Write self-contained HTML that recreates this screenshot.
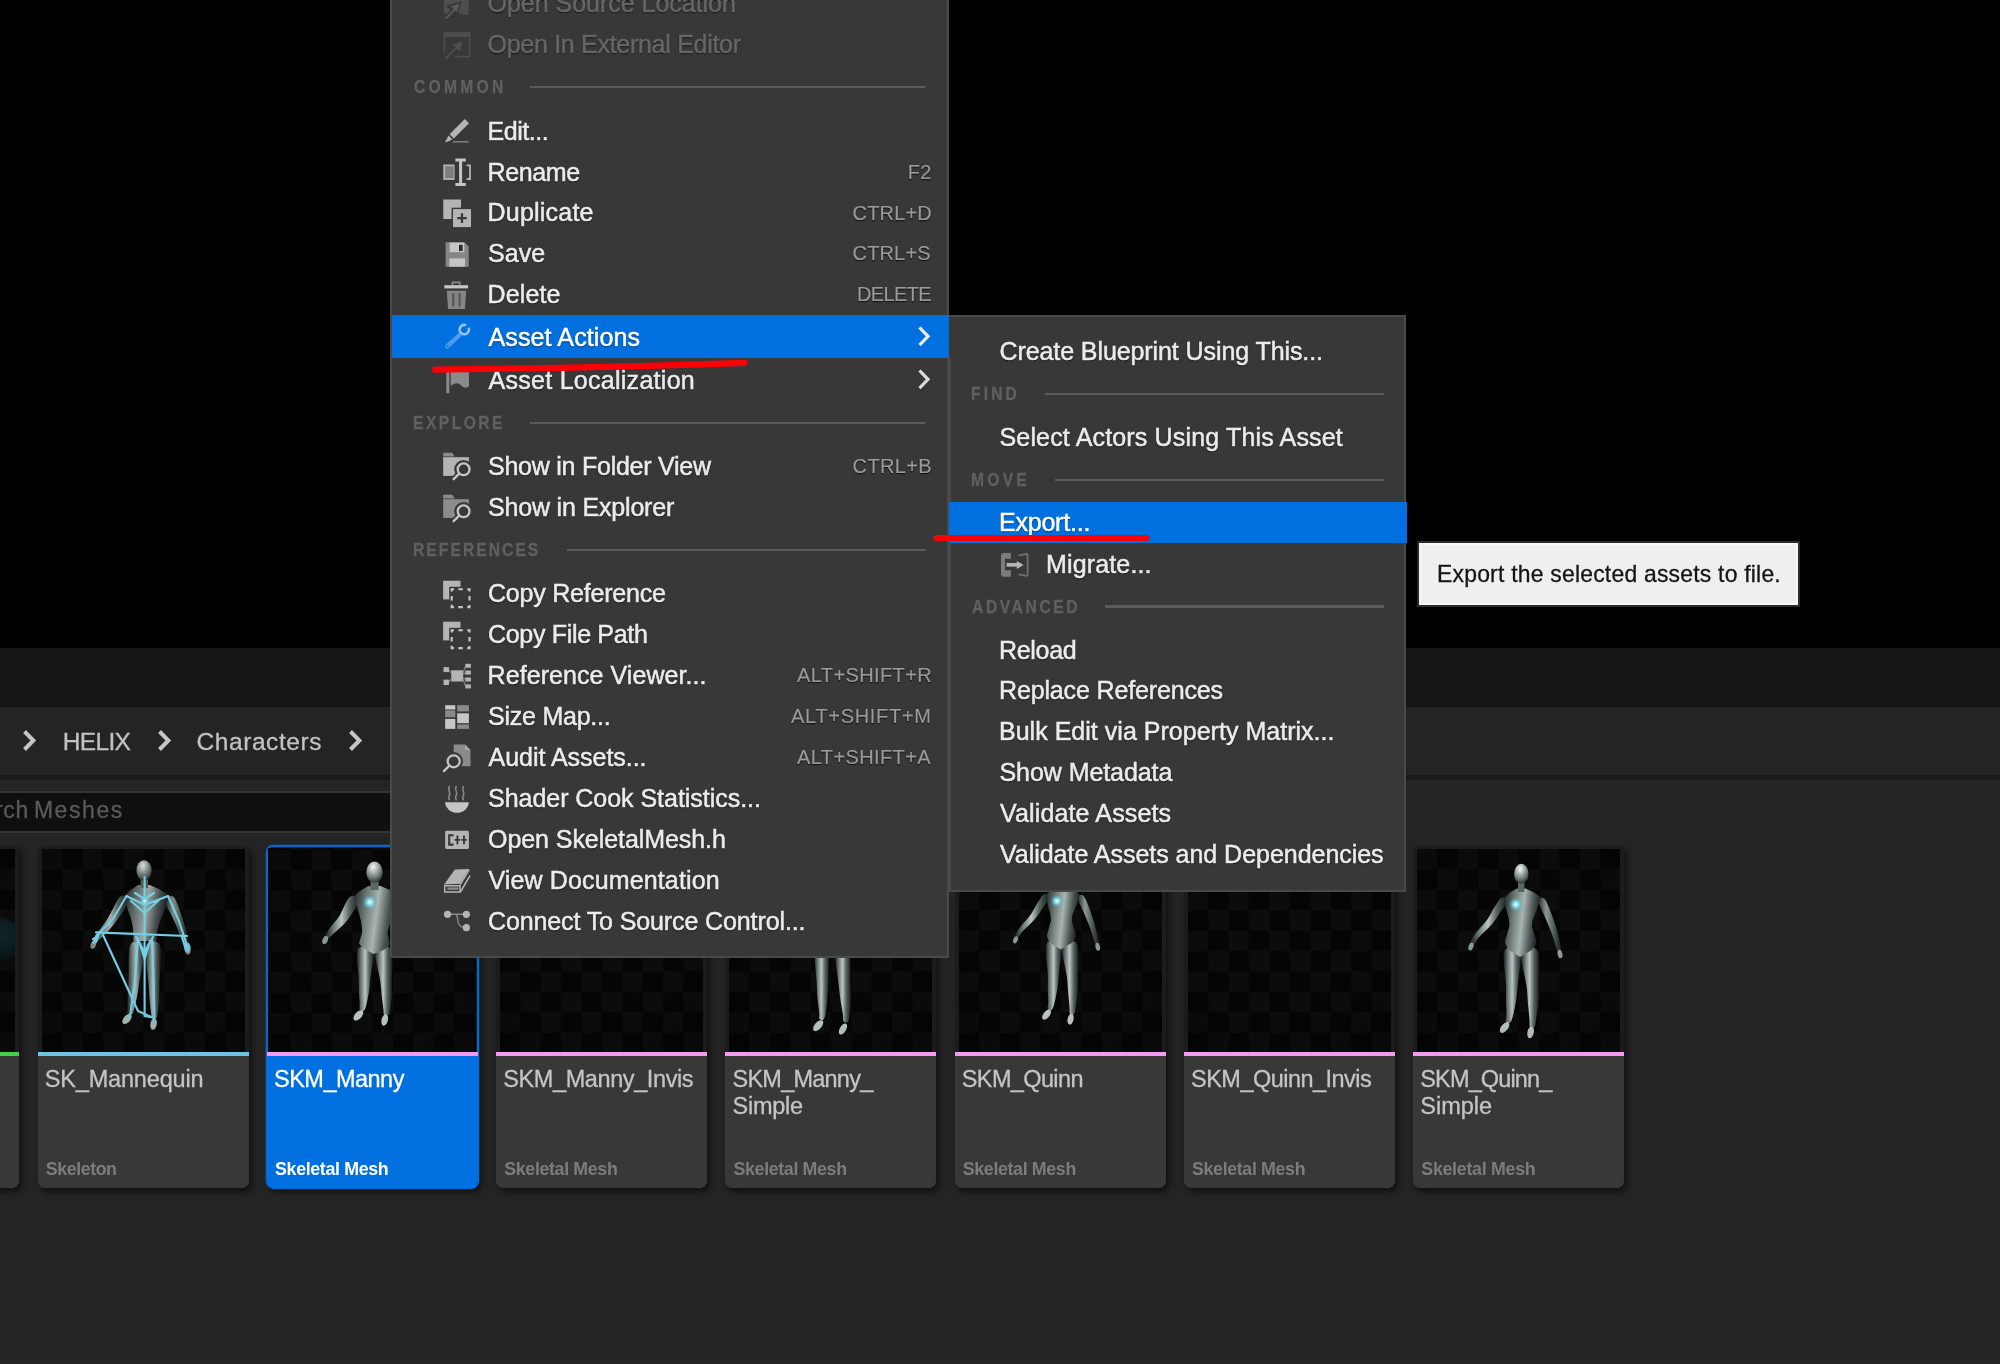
<!DOCTYPE html>
<html><head><meta charset="utf-8"><title>UE</title>
<style>
html,body{margin:0;padding:0;background:#000;}
body{width:2000px;height:1364px;position:relative;overflow:hidden;font-family:"Liberation Sans",sans-serif;}
.a{position:absolute}
.t{position:absolute;white-space:pre;text-shadow:0 1.2px 1.2px rgba(0,0,0,.8);-webkit-text-stroke:0.5px currentColor;}
.t.sc{-webkit-text-stroke:0.15px currentColor}
.t.ns{text-shadow:none;-webkit-text-stroke:0.3px currentColor}
.t.tb{-webkit-text-stroke:0}
.tl{position:absolute;left:0;top:0;width:2000px;height:1364px;will-change:transform}
.ic{position:absolute;overflow:visible}
.hl{position:absolute;height:2.2px;background:#5c5c5c}
.tile{position:absolute;top:846px;width:211px;height:342px;background:#1c1c1c;border-radius:5px 5px 7px 7px;box-shadow:3px 4px 6px rgba(0,0,0,.55)}
.tile .th{position:absolute;left:4.2px;top:3.4px;width:203px;height:202.6px;overflow:hidden;
 background:conic-gradient(#050505 25%,#0c0c0c 0 50%,#050505 0 75%,#0c0c0c 0) 0 0/40.8px 40.8px}
.tile .th:after{content:"";position:absolute;left:0;top:0;right:0;bottom:0;background:radial-gradient(ellipse at 50% 45%,rgba(0,0,0,0) 35%,rgba(0,0,0,.22) 100%)}
.tile .th svg{position:absolute;left:-0.7px;top:-0.4px}
.tile .st{position:absolute;left:0;top:206px;width:211px;height:4.2px}
.tile .lb{position:absolute;left:0;top:210.2px;width:211px;height:131.8px;background:#383838;border-radius:0 0 7px 7px}
.tile.sel{box-shadow:0 0 0 1.3px #0868d0,0 0 0 1.2px #0868d0 inset,3px 4px 6px rgba(0,0,0,.55);background:#0a0a0a;border-radius:6px 6px 7px 7px}
.tile.sel .th{left:1.6px;top:1.6px;width:207.8px;height:204.4px;background-position:2.6px 1.8px}
.tile.sel .th svg{left:2.6px;top:1.8px}
.tile.sel .lb{background:#0070e0}
</style></head><body>
<!-- content browser background -->
<div class="a" style="left:0;top:648px;width:2000px;height:59px;background:#151515"></div>
<div class="a" style="left:0;top:707px;width:2000px;height:657px;background:#242424"></div>
<div class="a" style="left:0;top:775px;width:2000px;height:5px;background:#1a1a1a"></div>
<div class="a" style="left:-4px;top:791px;width:1390px;height:38px;background:#0f0f0f;border:2px solid #353535;border-radius:3px"></div>
<div class="tile" style="left:-191.75px"><div class="th"><div style="position:absolute;left:165px;top:68px;width:44px;height:44px;border-radius:50%;background:radial-gradient(circle at 60% 40%,#12292e,#081518 70%)"></div></div><div class="st" style="background:#3fd24a"></div><div class="lb"></div></div>
<div class="tile" style="left:37.5px"><div class="th"><svg width="204" height="203" viewBox="0 0 204 203"><defs><linearGradient id="g1m" x1="0" y1="0" x2="1" y2="0"><stop offset="0" stop-color="#1c2221"/><stop offset=".28" stop-color="#7c8885"/><stop offset=".48" stop-color="#bac4c1"/><stop offset=".72" stop-color="#566260"/><stop offset="1" stop-color="#181d1c"/></linearGradient><linearGradient id="g1d" x1="0" y1="0" x2="1" y2="0"><stop offset="0" stop-color="#262d2b"/><stop offset=".35" stop-color="#8c9895"/><stop offset=".6" stop-color="#5e6a67"/><stop offset="1" stop-color="#1c2221"/></linearGradient><linearGradient id="g1t" x1="0" y1="0" x2="1" y2="0.2"><stop offset="0" stop-color="#242b29"/><stop offset=".3" stop-color="#707c79"/><stop offset=".55" stop-color="#a9b4b1"/><stop offset=".8" stop-color="#4e5957"/><stop offset="1" stop-color="#1b2120"/></linearGradient><radialGradient id="g1c"><stop offset="0" stop-color="#f2ffff"/><stop offset=".35" stop-color="#8fe6f2" stop-opacity=".95"/><stop offset="1" stop-color="#3aa8c0" stop-opacity="0"/></radialGradient><radialGradient id="g1h" cx=".42" cy=".25" r=".75"><stop offset="0" stop-color="#ffffff"/><stop offset=".35" stop-color="#b4bfbc"/><stop offset=".8" stop-color="#59635f"/><stop offset="1" stop-color="#2e3533"/></radialGradient><filter id="g1b" x="-20%" y="-20%" width="140%" height="140%"><feGaussianBlur stdDeviation="0.75"/></filter></defs><g transform="translate(0 0) scale(1)"><g opacity=".9"><g filter="url(#g1b)"><path d="M85.0 47.5 Q80.2 44.6 76.9 50.5 Q73.6 56.4 70.5 62.5 Q67.5 68.6 64.3 73.1 Q61.1 77.6 57.9 81.5 Q54.6 85.5 52.8 88.5 Q51.0 91.5 53.0 93.0 Q55.0 94.5 57.2 92.0 Q59.4 89.5 63.1 86.0 Q66.9 82.4 70.7 77.9 Q74.5 73.4 78.5 67.5 Q82.4 61.6 86.1 56.0 Q89.8 50.4 85.0 47.5 Z" fill="url(#g1m)"/><path d="M127.0 47.5 Q121.9 49.9 125.1 56.0 Q128.3 62.1 131.2 67.8 Q134.0 73.5 136.0 78.3 Q137.9 83.1 139.5 87.5 Q141.0 91.8 142.2 95.3 Q143.5 98.7 146.0 98.0 Q148.5 97.3 147.8 93.7 Q147.0 90.2 146.0 85.5 Q145.1 80.9 143.5 75.7 Q142.0 70.5 139.8 64.2 Q137.7 57.9 134.9 51.5 Q132.1 45.1 127.0 47.5 Z" fill="url(#g1d)"/><path d="M97.0 92.0 Q88.7 91.2 88.1 101.2 Q87.5 111.2 87.6 120.8 Q87.7 130.4 87.0 137.9 Q86.4 145.4 86.5 153.5 Q86.5 161.5 86.1 163.4 Q85.7 165.3 88.4 166.0 Q91.1 166.7 91.8 164.6 Q92.5 162.5 94.5 154.5 Q96.6 146.6 97.5 139.1 Q98.3 131.6 100.4 122.2 Q102.5 112.8 103.9 102.8 Q105.3 92.8 97.0 92.0 Z" fill="url(#g1m)"/><path d="M111.6 92.0 Q103.2 92.3 104.1 102.8 Q104.9 113.3 106.3 123.2 Q107.6 133.1 108.0 141.1 Q108.3 149.1 109.3 157.5 Q110.4 166.0 110.4 167.9 Q110.5 169.9 113.2 170.0 Q115.9 170.1 116.2 168.1 Q116.4 166.0 117.5 157.5 Q118.5 148.9 118.4 140.9 Q118.4 132.9 119.1 122.8 Q119.9 112.7 119.9 102.2 Q120.0 91.7 111.6 92.0 Z" fill="url(#g1m)"/><path d="M97 36 L109 36 Q119 40 127.5 46 Q126 58 120.5 68 Q116.5 78 115.5 86 L115.5 92 L92.5 92 L92.5 86 Q92 76 89.5 68 Q85 58 84.5 46 Q90 40 97 36 Z" fill="url(#g1t)"/><rect x="99.6" y="30" width="7.4" height="9" fill="#5c6764"/><ellipse cx="103" cy="21.5" rx="7.6" ry="10.2" fill="url(#g1h)"/><ellipse cx="86" cy="170" rx="3.4" ry="6" transform="rotate(40 86 170)" fill="#c2ccc9"/><ellipse cx="112.6" cy="175" rx="3.2" ry="5.8" transform="rotate(10 112.6 175)" fill="#c2ccc9"/><ellipse cx="52.4" cy="95.5" rx="2.6" ry="4.4" transform="rotate(20 52.4 95.5)" fill="#8c9895"/><ellipse cx="146.6" cy="100.5" rx="3" ry="5" transform="rotate(-8 146.6 100.5)" fill="#8c9895"/></g></g><g stroke="#74cfe6" stroke-width="2.1" fill="none" stroke-linecap="round" stroke-linejoin="round" filter="url(#g1b)"><path d="M103.6 28 V167"/><path d="M55 83.4 L146 87"/><path d="M62 86 L97 162 L111.5 168.5 L103.6 167"/><path d="M85.5 47 L72 70 L55.5 86.5 L52.5 94"/><path d="M127 47 L137.6 71 L144 90 L146 98"/><path d="M85.5 47 L103.6 56 L127 47 M90 52 L103.6 64 L118 51 M94 44 L103.6 50 L113 44"/><path d="M97 90 L94 130 L89.6 164 L86 170"/><path d="M111 90 L112.6 132 L113.4 167 L112.8 174"/><path d="M95 88 L103.6 103 L112 88 M98 92 L103.6 110 L109 92"/><path d="M58 85 L55 93 M57 88 L52 90"/><path d="M141 88 L144 98"/></g><ellipse cx="146.4" cy="98.5" rx="3.2" ry="5" fill="#74cfe6" opacity=".85" filter="url(#g1b)"/><circle cx="103.6" cy="52" r="5.5" fill="url(#g1c)" opacity=".8"/></g></svg></div><div class="st" style="background:#6ec4e0"></div><div class="lb"></div></div>
<div class="tile sel" style="left:266.75px"><div class="th"><svg width="204" height="203" viewBox="0 0 204 203"><defs><linearGradient id="g2m" x1="0" y1="0" x2="1" y2="0"><stop offset="0" stop-color="#1c2221"/><stop offset=".28" stop-color="#7c8885"/><stop offset=".48" stop-color="#bac4c1"/><stop offset=".72" stop-color="#566260"/><stop offset="1" stop-color="#181d1c"/></linearGradient><linearGradient id="g2d" x1="0" y1="0" x2="1" y2="0"><stop offset="0" stop-color="#262d2b"/><stop offset=".35" stop-color="#8c9895"/><stop offset=".6" stop-color="#5e6a67"/><stop offset="1" stop-color="#1c2221"/></linearGradient><linearGradient id="g2t" x1="0" y1="0" x2="1" y2="0.2"><stop offset="0" stop-color="#242b29"/><stop offset=".3" stop-color="#707c79"/><stop offset=".55" stop-color="#a9b4b1"/><stop offset=".8" stop-color="#4e5957"/><stop offset="1" stop-color="#1b2120"/></linearGradient><radialGradient id="g2c"><stop offset="0" stop-color="#f2ffff"/><stop offset=".35" stop-color="#8fe6f2" stop-opacity=".95"/><stop offset="1" stop-color="#3aa8c0" stop-opacity="0"/></radialGradient><radialGradient id="g2h" cx=".42" cy=".25" r=".75"><stop offset="0" stop-color="#ffffff"/><stop offset=".35" stop-color="#b4bfbc"/><stop offset=".8" stop-color="#59635f"/><stop offset="1" stop-color="#2e3533"/></radialGradient><filter id="g2b" x="-20%" y="-20%" width="140%" height="140%"><feGaussianBlur stdDeviation="0.75"/></filter></defs><g transform="translate(0 0) scale(1)"><g filter="url(#g2b)"><path d="M85.0 47.8 Q80.0 44.7 76.7 50.5 Q73.3 56.3 71.2 61.6 Q69.1 66.9 66.1 70.3 Q63.1 73.7 60.6 76.8 Q58.0 79.9 55.8 83.5 Q53.5 87.0 55.5 88.5 Q57.5 90.0 60.1 87.0 Q62.8 84.1 65.8 81.7 Q68.9 79.3 72.6 75.6 Q76.3 71.9 79.5 66.8 Q82.7 61.7 86.3 56.3 Q90.0 50.9 85.0 47.8 Z" fill="url(#g2m)"/><path d="M127.0 47.8 Q121.8 50.6 125.0 55.9 Q128.1 61.2 130.5 66.3 Q132.9 71.4 134.5 75.8 Q136.2 80.2 137.8 84.5 Q139.5 88.8 140.8 92.7 Q142.1 96.6 144.5 96.0 Q146.9 95.4 146.2 91.3 Q145.5 87.2 144.7 82.5 Q143.8 77.8 142.5 73.2 Q141.1 68.6 139.5 62.7 Q137.9 56.8 135.0 50.9 Q132.2 45.0 127.0 47.8 Z" fill="url(#g2d)"/><path d="M95.0 97.0 Q85.9 96.4 85.9 104.5 Q85.9 112.6 86.9 120.9 Q88.0 129.2 87.8 135.5 Q87.6 141.7 88.3 149.2 Q89.0 156.7 88.5 159.0 Q88.0 161.2 90.6 162.0 Q93.2 162.8 94.1 160.1 Q95.0 157.5 96.7 149.9 Q98.4 142.3 98.7 135.9 Q99.0 129.6 100.6 121.5 Q102.1 113.4 103.1 105.5 Q104.1 97.6 95.0 97.0 Z" fill="url(#g2m)"/><path d="M111.4 97.0 Q102.4 98.2 103.9 106.5 Q105.5 114.9 107.5 123.1 Q109.5 131.4 110.0 138.8 Q110.4 146.1 111.6 153.9 Q112.8 161.6 112.6 163.9 Q112.5 166.2 115.2 166.5 Q117.9 166.8 118.4 164.3 Q118.8 161.8 120.0 153.8 Q121.2 145.9 120.8 138.2 Q120.5 130.6 121.1 121.9 Q121.7 113.1 121.1 104.5 Q120.4 95.8 111.4 97.0 Z" fill="url(#g2m)"/><path d="M97.5 37 L109.5 37 Q119 40.5 127.5 46 Q126.5 58 121.5 68 Q117.5 78 116.5 84 Q118 90 119 95 Q116 100 108 103 L102.6 105 L97 102 Q90 98 88 94 Q90 88 91.2 83 Q91 74 88.5 66 Q84.5 56 84 46 Q90 40.5 97.5 37 Z" fill="url(#g2t)"/><rect x="99.6" y="32" width="8" height="9" fill="#5c6764"/><ellipse cx="103.5" cy="23.2" rx="8.2" ry="10.6" fill="url(#g2h)"/><ellipse cx="87.4" cy="166.4" rx="3.4" ry="6.2" transform="rotate(42 87.4 166.4)" fill="#c2ccc9"/><ellipse cx="113.7" cy="171" rx="3.2" ry="5.8" transform="rotate(14 113.7 171)" fill="#c2ccc9"/><ellipse cx="54.2" cy="91" rx="2.6" ry="4.4" transform="rotate(22 54.2 91)" fill="#8c9895"/><ellipse cx="145.2" cy="99" rx="2.6" ry="4.6" transform="rotate(-10 145.2 99)" fill="#8c9895"/></g><circle cx="98.9" cy="53.2" r="7.6" fill="url(#g2c)"/></g></svg></div><div class="st" style="background:#f29af0"></div><div class="lb"></div></div>
<div class="tile" style="left:496.0px"><div class="th"></div><div class="st" style="background:#f29af0"></div><div class="lb"></div></div>
<div class="tile" style="left:725.25px"><div class="th"><svg width="204" height="203" viewBox="0 0 204 203"><defs><linearGradient id="g3m" x1="0" y1="0" x2="1" y2="0"><stop offset="0" stop-color="#1c2221"/><stop offset=".28" stop-color="#7c8885"/><stop offset=".48" stop-color="#bac4c1"/><stop offset=".72" stop-color="#566260"/><stop offset="1" stop-color="#181d1c"/></linearGradient><linearGradient id="g3d" x1="0" y1="0" x2="1" y2="0"><stop offset="0" stop-color="#262d2b"/><stop offset=".35" stop-color="#8c9895"/><stop offset=".6" stop-color="#5e6a67"/><stop offset="1" stop-color="#1c2221"/></linearGradient><linearGradient id="g3t" x1="0" y1="0" x2="1" y2="0.2"><stop offset="0" stop-color="#242b29"/><stop offset=".3" stop-color="#707c79"/><stop offset=".55" stop-color="#a9b4b1"/><stop offset=".8" stop-color="#4e5957"/><stop offset="1" stop-color="#1b2120"/></linearGradient><radialGradient id="g3c"><stop offset="0" stop-color="#f2ffff"/><stop offset=".35" stop-color="#8fe6f2" stop-opacity=".95"/><stop offset="1" stop-color="#3aa8c0" stop-opacity="0"/></radialGradient><radialGradient id="g3h" cx=".42" cy=".25" r=".75"><stop offset="0" stop-color="#ffffff"/><stop offset=".35" stop-color="#b4bfbc"/><stop offset=".8" stop-color="#59635f"/><stop offset="1" stop-color="#2e3533"/></radialGradient><filter id="g3b" x="-20%" y="-20%" width="140%" height="140%"><feGaussianBlur stdDeviation="0.75"/></filter></defs><g transform="translate(0 0) scale(1)"><g filter="url(#g3b)"><path d="M92.7 90.0 Q84.6 90.0 85.0 101.1 Q85.5 112.1 86.7 122.6 Q87.9 133.1 88.0 140.6 Q88.0 148.0 89.4 156.9 Q90.8 165.7 90.2 167.9 Q89.5 170.2 92.0 171.0 Q94.5 171.8 95.5 169.0 Q96.6 166.1 97.7 157.0 Q98.8 148.0 98.9 140.4 Q99.1 132.9 99.5 122.4 Q99.9 111.9 100.4 100.9 Q100.8 90.0 92.7 90.0 Z" fill="url(#g3m)"/><path d="M113.3 90.0 Q105.2 90.2 105.9 101.8 Q106.6 113.4 108.1 123.9 Q109.6 134.4 110.4 142.4 Q111.1 150.3 112.8 158.7 Q114.4 167.0 114.1 170.1 Q113.9 173.2 116.6 173.5 Q119.3 173.8 119.9 170.4 Q120.4 167.0 121.2 158.3 Q122.1 149.7 121.7 141.6 Q121.4 133.6 121.2 123.1 Q121.0 112.6 121.2 101.2 Q121.4 89.8 113.3 90.0 Z" fill="url(#g3m)"/><ellipse cx="89.2" cy="176.6" rx="3.4" ry="6.6" transform="rotate(42 89.2 176.6)" fill="#c2ccc9"/><ellipse cx="114" cy="180" rx="3.2" ry="6.2" transform="rotate(30 114 180)" fill="#c2ccc9"/></g></g></svg></div><div class="st" style="background:#f29af0"></div><div class="lb"></div></div>
<div class="tile" style="left:954.5px"><div class="th"><svg width="204" height="203" viewBox="0 0 204 203"><defs><linearGradient id="g4m" x1="0" y1="0" x2="1" y2="0"><stop offset="0" stop-color="#1c2221"/><stop offset=".28" stop-color="#7c8885"/><stop offset=".48" stop-color="#bac4c1"/><stop offset=".72" stop-color="#566260"/><stop offset="1" stop-color="#181d1c"/></linearGradient><linearGradient id="g4d" x1="0" y1="0" x2="1" y2="0"><stop offset="0" stop-color="#262d2b"/><stop offset=".35" stop-color="#8c9895"/><stop offset=".6" stop-color="#5e6a67"/><stop offset="1" stop-color="#1c2221"/></linearGradient><linearGradient id="g4t" x1="0" y1="0" x2="1" y2="0.2"><stop offset="0" stop-color="#242b29"/><stop offset=".3" stop-color="#707c79"/><stop offset=".55" stop-color="#a9b4b1"/><stop offset=".8" stop-color="#4e5957"/><stop offset="1" stop-color="#1b2120"/></linearGradient><radialGradient id="g4c"><stop offset="0" stop-color="#f2ffff"/><stop offset=".35" stop-color="#8fe6f2" stop-opacity=".95"/><stop offset="1" stop-color="#3aa8c0" stop-opacity="0"/></radialGradient><radialGradient id="g4h" cx=".42" cy=".25" r=".75"><stop offset="0" stop-color="#ffffff"/><stop offset=".35" stop-color="#b4bfbc"/><stop offset=".8" stop-color="#59635f"/><stop offset="1" stop-color="#2e3533"/></radialGradient><filter id="g4b" x="-20%" y="-20%" width="140%" height="140%"><feGaussianBlur stdDeviation="0.75"/></filter></defs><g transform="translate(7.6 0.7) scale(0.924)"><g filter="url(#g4b)"><path d="M88.5 49.0 Q85.1 46.6 80.9 52.8 Q76.7 58.9 73.8 64.7 Q70.9 70.5 66.9 74.7 Q62.9 79.0 59.5 83.1 Q56.1 87.1 54.3 90.8 Q52.6 94.5 54.5 95.5 Q56.4 96.5 58.2 93.2 Q59.9 89.9 63.5 86.4 Q67.1 83.0 71.6 78.7 Q76.1 74.4 79.7 68.7 Q83.3 63.1 87.6 57.2 Q91.9 51.4 88.5 49.0 Z" fill="url(#g4m)"/><path d="M123.5 49.0 Q119.9 50.7 122.7 56.6 Q125.4 62.5 127.9 68.1 Q130.3 73.6 132.2 78.3 Q134.2 82.9 135.9 87.8 Q137.6 92.7 139.0 97.8 Q140.4 103.0 142.6 102.5 Q144.8 102.0 143.6 96.7 Q142.4 91.3 141.1 86.2 Q139.8 81.1 138.3 76.1 Q136.7 71.2 134.6 65.3 Q132.6 59.5 129.8 53.4 Q127.1 47.3 123.5 49.0 Z" fill="url(#g4d)"/><path d="M96.0 98.0 Q86.6 97.4 86.6 106.1 Q86.6 114.8 88.0 125.1 Q89.4 135.4 89.0 142.5 Q88.7 149.6 89.2 158.6 Q89.7 167.5 88.8 170.3 Q87.9 173.1 90.5 174.0 Q93.1 174.9 94.4 171.7 Q95.7 168.5 97.7 159.4 Q99.7 150.4 100.2 143.0 Q100.6 135.6 102.0 125.4 Q103.4 115.2 104.4 106.9 Q105.4 98.6 96.0 98.0 Z" fill="url(#g4m)"/><path d="M111.6 98.0 Q102.3 99.2 104.0 108.5 Q105.7 117.9 107.9 128.4 Q110.2 138.9 110.4 146.5 Q110.7 154.0 111.8 163.2 Q112.8 172.4 112.5 175.5 Q112.3 178.7 115.0 179.0 Q117.7 179.3 118.3 176.0 Q118.8 172.6 120.2 163.3 Q121.7 154.0 121.6 146.1 Q121.4 138.3 121.9 127.2 Q122.3 116.1 121.6 106.5 Q120.9 96.8 111.6 98.0 Z" fill="url(#g4m)"/><path d="M88 48 Q93 42.5 100 39.5 L108.5 39.5 Q117 42.5 123.5 48 Q121.5 58 118 65 Q114.4 72 115 78 Q117.6 86 119.7 93 Q118 100 109.6 104 L103 108 L96.6 104 Q89 100 88 93 Q90 85 92.4 77 Q92.6 70 90 63 Q87.4 55 88 48 Z" fill="url(#g4t)"/><rect x="101" y="33" width="6.4" height="10" fill="#5c6764"/><ellipse cx="104.3" cy="24.7" rx="7.2" ry="10" fill="url(#g4h)"/><ellipse cx="87.6" cy="178.5" rx="3.4" ry="6.4" transform="rotate(38 87.6 178.5)" fill="#c2ccc9"/><ellipse cx="113.6" cy="183.4" rx="3.2" ry="6" transform="rotate(12 113.6 183.4)" fill="#c2ccc9"/><ellipse cx="54" cy="97.5" rx="2.4" ry="4" transform="rotate(20 54 97.5)" fill="#8c9895"/><ellipse cx="143" cy="105" rx="2.4" ry="4.4" transform="rotate(-12 143 105)" fill="#8c9895"/></g><circle cx="98.9" cy="55.5" r="7.2" fill="url(#g4c)"/></g></svg></div><div class="st" style="background:#f29af0"></div><div class="lb"></div></div>
<div class="tile" style="left:1183.75px"><div class="th"></div><div class="st" style="background:#f29af0"></div><div class="lb"></div></div>
<div class="tile" style="left:1413.0px"><div class="th"><svg width="204" height="203" viewBox="0 0 204 203"><defs><linearGradient id="g5m" x1="0" y1="0" x2="1" y2="0"><stop offset="0" stop-color="#1c2221"/><stop offset=".28" stop-color="#7c8885"/><stop offset=".48" stop-color="#bac4c1"/><stop offset=".72" stop-color="#566260"/><stop offset="1" stop-color="#181d1c"/></linearGradient><linearGradient id="g5d" x1="0" y1="0" x2="1" y2="0"><stop offset="0" stop-color="#262d2b"/><stop offset=".35" stop-color="#8c9895"/><stop offset=".6" stop-color="#5e6a67"/><stop offset="1" stop-color="#1c2221"/></linearGradient><linearGradient id="g5t" x1="0" y1="0" x2="1" y2="0.2"><stop offset="0" stop-color="#242b29"/><stop offset=".3" stop-color="#707c79"/><stop offset=".55" stop-color="#a9b4b1"/><stop offset=".8" stop-color="#4e5957"/><stop offset="1" stop-color="#1b2120"/></linearGradient><radialGradient id="g5c"><stop offset="0" stop-color="#f2ffff"/><stop offset=".35" stop-color="#8fe6f2" stop-opacity=".95"/><stop offset="1" stop-color="#3aa8c0" stop-opacity="0"/></radialGradient><radialGradient id="g5h" cx=".42" cy=".25" r=".75"><stop offset="0" stop-color="#ffffff"/><stop offset=".35" stop-color="#b4bfbc"/><stop offset=".8" stop-color="#59635f"/><stop offset="1" stop-color="#2e3533"/></radialGradient><filter id="g5b" x="-20%" y="-20%" width="140%" height="140%"><feGaussianBlur stdDeviation="0.75"/></filter></defs><g transform="translate(0 0) scale(1)"><g filter="url(#g5b)"><path d="M88.5 49.0 Q85.1 46.6 80.9 52.8 Q76.7 58.9 73.8 64.7 Q70.9 70.5 66.9 74.7 Q62.9 79.0 59.5 83.1 Q56.1 87.1 54.3 90.8 Q52.6 94.5 54.5 95.5 Q56.4 96.5 58.2 93.2 Q59.9 89.9 63.5 86.4 Q67.1 83.0 71.6 78.7 Q76.1 74.4 79.7 68.7 Q83.3 63.1 87.6 57.2 Q91.9 51.4 88.5 49.0 Z" fill="url(#g5m)"/><path d="M123.5 49.0 Q119.9 50.7 122.7 56.6 Q125.4 62.5 127.9 68.1 Q130.3 73.6 132.2 78.3 Q134.2 82.9 135.9 87.8 Q137.6 92.7 139.0 97.8 Q140.4 103.0 142.6 102.5 Q144.8 102.0 143.6 96.7 Q142.4 91.3 141.1 86.2 Q139.8 81.1 138.3 76.1 Q136.7 71.2 134.6 65.3 Q132.6 59.5 129.8 53.4 Q127.1 47.3 123.5 49.0 Z" fill="url(#g5d)"/><path d="M96.0 98.0 Q86.6 97.4 86.6 106.1 Q86.6 114.8 88.0 125.1 Q89.4 135.4 89.0 142.5 Q88.7 149.6 89.2 158.6 Q89.7 167.5 88.8 170.3 Q87.9 173.1 90.5 174.0 Q93.1 174.9 94.4 171.7 Q95.7 168.5 97.7 159.4 Q99.7 150.4 100.2 143.0 Q100.6 135.6 102.0 125.4 Q103.4 115.2 104.4 106.9 Q105.4 98.6 96.0 98.0 Z" fill="url(#g5m)"/><path d="M111.6 98.0 Q102.3 99.2 104.0 108.5 Q105.7 117.9 107.9 128.4 Q110.2 138.9 110.4 146.5 Q110.7 154.0 111.8 163.2 Q112.8 172.4 112.5 175.5 Q112.3 178.7 115.0 179.0 Q117.7 179.3 118.3 176.0 Q118.8 172.6 120.2 163.3 Q121.7 154.0 121.6 146.1 Q121.4 138.3 121.9 127.2 Q122.3 116.1 121.6 106.5 Q120.9 96.8 111.6 98.0 Z" fill="url(#g5m)"/><path d="M88 48 Q93 42.5 100 39.5 L108.5 39.5 Q117 42.5 123.5 48 Q121.5 58 118 65 Q114.4 72 115 78 Q117.6 86 119.7 93 Q118 100 109.6 104 L103 108 L96.6 104 Q89 100 88 93 Q90 85 92.4 77 Q92.6 70 90 63 Q87.4 55 88 48 Z" fill="url(#g5t)"/><rect x="101" y="33" width="6.4" height="10" fill="#5c6764"/><ellipse cx="104.3" cy="24.7" rx="7.2" ry="10" fill="url(#g5h)"/><ellipse cx="87.6" cy="178.5" rx="3.4" ry="6.4" transform="rotate(38 87.6 178.5)" fill="#c2ccc9"/><ellipse cx="113.6" cy="183.4" rx="3.2" ry="6" transform="rotate(12 113.6 183.4)" fill="#c2ccc9"/><ellipse cx="54" cy="97.5" rx="2.4" ry="4" transform="rotate(20 54 97.5)" fill="#8c9895"/><ellipse cx="143" cy="105" rx="2.4" ry="4.4" transform="rotate(-12 143 105)" fill="#8c9895"/></g><circle cx="98.9" cy="55.5" r="7.2" fill="url(#g5c)"/></g></svg></div><div class="st" style="background:#f29af0"></div><div class="lb"></div></div>
<!-- main menu -->
<div class="a" style="left:390px;top:-20px;width:555px;height:974px;background:#383838;border:2px solid #494949"></div>
<div class="a" style="left:392px;top:315px;width:557px;height:43px;background:#0070e0"></div>
<!-- sub menu -->
<div class="a" style="left:949px;top:315px;width:454.5px;height:573px;background:#383838;border:2px solid #494949;border-left-width:0"></div>
<div class="a" style="left:947px;top:358px;width:2px;height:532px;background:#494949"></div>
<div class="a" style="left:949px;top:358px;width:1.6px;height:532px;background:#494949"></div>
<div class="a" style="left:948.8px;top:502px;width:458.2px;height:41.2px;background:#0070e0"></div>
<div class="hl" style="left:529.6px;top:86.2px;width:395.9px"></div><div class="hl" style="left:529.6px;top:422.2px;width:395.9px"></div><div class="hl" style="left:566.5px;top:548.8px;width:359.0px"></div><div class="hl" style="left:1044.8px;top:392.6px;width:338.9000000000001px"></div><div class="hl" style="left:1054.7px;top:478.6px;width:329.0px"></div><div class="hl" style="left:1105.2px;top:605.4px;width:278.5px"></div>
<svg class="ic" style="left:443px;top:-9.5px;opacity:1" width="28" height="28" viewBox="0 0 28 28" fill="#4e4e4e" stroke="none"><path d="M0.7 0 H25.7 V23.9 H18.6 V22.4 H0.7 Z"/><path d="M0.7 22.4 L2 22.4 L7.4 13.6 L16 12.4 L18.2 20 L18.6 22.4 Z" fill="#383838" opacity=".0"/>
<path d="M1.2 22.6 L0.7 28 L9 28 L9 22.6 Z" fill="#383838" opacity="0"/>
<path d="M3 14 L1 24 L11 22 Z" fill="#383838" opacity=".0"/>
<path d="M2.7 27.6 L11.6 18.7" stroke="#383838" stroke-width="5" fill="none"/><polygon points="17,12 5.4,15.4 13.4,23.6" fill="#3c3c3c" stroke="#383838" stroke-width="2.5"/>
<path d="M2.7 27.6 L12.6 17.7" stroke="#5a5a5a" stroke-width="2" fill="none"/><polygon points="16.6,12.6 8,15.4 13.8,21.2" fill="#5a5a5a"/></svg>
<svg class="ic" style="left:443px;top:30.8px;opacity:1" width="28" height="28" viewBox="0 0 28 28" fill="#4e4e4e" stroke="none"><path d="M1.4 21.6 V1.8 H26.6 V25.4 H12" fill="none" stroke="#4e4e4e" stroke-width="1.5"/>
<rect x="0.7" y="1.1" width="26.6" height="4.9"/>
<path d="M2.7 27.7 L14 16.4" stroke="#4e4e4e" stroke-width="2" fill="none"/><polygon points="19.6,10.3 9.8,13.3 16.8,20.2"/></svg>
<svg class="ic" style="left:443px;top:117.30000000000001px;opacity:1" width="28" height="28" viewBox="0 0 28 28" fill="#b4b4b4" stroke="none"><polygon points="21.8,2 26,6.2 10.8,21.4 6.6,17.2"/><polygon points="5.5,18.5 9.5,22.5 1.8,25.8"/><rect x="9.9" y="24.2" width="15.8" height="1.3" fill="#8a8a8a"/></svg>
<svg class="ic" style="left:443px;top:158.0px;opacity:1" width="28" height="28" viewBox="0 0 28 28" fill="#b4b4b4" stroke="none"><rect x="1.2" y="7.4" width="10.4" height="13.6" fill="#7e7e7e" stroke="#b4b4b4" stroke-width="1.8"/>
<path d="M23 7.4 H27 V21 H23" fill="none" stroke="#b4b4b4" stroke-width="1.8"/>
<rect x="11.6" y="5" width="12" height="18.6" fill="#383838"/>
<path d="M12.4 1.9 H22.8 M12.4 26.6 H22.8 M17.6 1.9 V26.6" fill="none" stroke="#c6c6c6" stroke-width="3"/></svg>
<svg class="ic" style="left:443px;top:198.8px;opacity:1" width="28" height="28" viewBox="0 0 28 28" fill="#b4b4b4" stroke="none"><rect x="0.3" y="0.5" width="17.7" height="19.5"/><rect x="8.6" y="8.7" width="21" height="21" fill="#383838"/><rect x="10" y="10.1" width="18" height="18"/>
<path d="M19 14.3 V23.9 M14.2 19.1 H23.8" stroke="#383838" stroke-width="2.2" fill="none"/></svg>
<svg class="ic" style="left:443px;top:239.5px;opacity:1" width="28" height="28" viewBox="0 0 28 28" fill="#b4b4b4" stroke="none"><path d="M2.6 2.3 H21.5 L25.7 6.5 V26.7 H2.6 Z" fill="#868686"/><rect x="6.7" y="2.6" width="14.6" height="9.6" fill="#c6c6c6"/><rect x="16" y="4.8" width="3.6" height="6.2" fill="#2a2a2a"/><rect x="6.3" y="18.4" width="15.7" height="8.3" fill="#c6c6c6"/></svg>
<svg class="ic" style="left:443px;top:280.3px;opacity:1" width="28" height="28" viewBox="0 0 28 28" fill="#b4b4b4" stroke="none"><path d="M9.6 5.4 V2.3 H16.8 V5.4" fill="none" stroke="#8a8a8a" stroke-width="1.7"/><rect x="1.3" y="5.2" width="23.8" height="3.2" fill="#c6c6c6"/>
<path d="M3.8 10.8 H23.2 L22 28.9 H5 Z" fill="#848484"/><path d="M10.3 13 V26.6 M16.6 13 V26.6" stroke="#555" stroke-width="2.2" fill="none"/></svg>
<svg class="ic" style="left:443px;top:322.7px;opacity:1" width="28" height="28" viewBox="0 0 28 28" fill="#9cc8f6" stroke="none"><path d="M15.8 12.8 L4.6 23" stroke-width="4.4" stroke="currentColor" fill="none" stroke-linecap="round" opacity=".0"/>
<path d="M16.6 12.0 L4.4 23.2" stroke="#4f9cec" stroke-width="4.4" fill="none" stroke-linecap="round"/>
<circle cx="4.6" cy="23" r="1.1" fill="#0070e0"/>
<path d="M25.9 5.8 A4.7 4.7 0 1 1 22.1 2" fill="none" stroke="#93c4f6" stroke-width="2.6" stroke-linecap="round"/></svg>
<svg class="ic" style="left:443px;top:366.6px;opacity:1" width="28" height="28" viewBox="0 0 28 28" fill="#8a8a8a" stroke="none"><rect x="3.3" y="3" width="3" height="23.1"/><path d="M7.7 3 H26 V19.6 C23 21.5 20.5 20.6 18.3 18.4 C15.6 15.8 11.5 15.4 7.7 19 Z"/></svg>
<svg class="ic" style="left:443px;top:452.4px;opacity:1" width="28" height="28" viewBox="0 0 28 28" fill="#b4b4b4" stroke="none"><path d="M0.2 0.8 H9.4 L11.6 4.6 H0.2 Z" fill="#8a8a8a"/><rect x="0.2" y="5.2" width="25.7" height="18.7"/>
<circle cx="20.6" cy="17.3" r="9.4" fill="#383838"/><path d="M16.4 21.2 L9 28.6" stroke="#383838" stroke-width="5.4" fill="none"/>
<circle cx="20.6" cy="17.3" r="5.9" fill="none" stroke="#c6c6c6" stroke-width="2.3"/><path d="M16.2 21.6 L10.6 27.2" stroke="#c6c6c6" stroke-width="2.4" fill="none" stroke-linecap="round"/></svg>
<svg class="ic" style="left:443px;top:493.5px;opacity:1" width="28" height="28" viewBox="0 0 28 28" fill="#8c8c8c" stroke="none"><path d="M0.2 0.8 H9.4 L11.6 4.6 H0.2 Z" fill="#8a8a8a"/><rect x="0.2" y="5.2" width="25.7" height="18.7"/>
<circle cx="20.6" cy="17.3" r="9.4" fill="#383838"/><path d="M16.4 21.2 L9 28.6" stroke="#383838" stroke-width="5.4" fill="none"/>
<circle cx="20.6" cy="17.3" r="5.9" fill="none" stroke="#c6c6c6" stroke-width="2.3"/><path d="M16.2 21.6 L10.6 27.2" stroke="#c6c6c6" stroke-width="2.4" fill="none" stroke-linecap="round"/></svg>
<svg class="ic" style="left:443px;top:578.5px;opacity:1" width="28" height="28" viewBox="0 0 28 28" fill="#b4b4b4" stroke="none"><rect x="0.1" y="1.7" width="17.4" height="18.7"/><rect x="6.2" y="7.8" width="23" height="23" fill="#383838"/>
<rect x="8.7" y="10.3" width="17.8" height="17.8" fill="none" stroke="#c6c6c6" stroke-width="2.1" stroke-dasharray="4.45 4.45" stroke-dashoffset="2.2"/></svg>
<svg class="ic" style="left:443px;top:619.5px;opacity:1" width="28" height="28" viewBox="0 0 28 28" fill="#b4b4b4" stroke="none"><rect x="0.1" y="1.7" width="17.4" height="18.7"/><rect x="6.2" y="7.8" width="23" height="23" fill="#383838"/>
<rect x="8.7" y="10.3" width="17.8" height="17.8" fill="none" stroke="#c6c6c6" stroke-width="2.1" stroke-dasharray="4.45 4.45" stroke-dashoffset="2.2"/></svg>
<svg class="ic" style="left:443px;top:660.5px;opacity:1" width="28" height="28" viewBox="0 0 28 28" fill="#b4b4b4" stroke="none"><rect x="8.2" y="9.3" width="11.8" height="11.2"/>
<rect x="0.5" y="6.1" width="5.5" height="5"/><rect x="0.5" y="18.6" width="5.5" height="5.4"/>
<rect x="22.3" y="2.8" width="5.6" height="4"/><rect x="22.3" y="9.6" width="5.6" height="4"/><rect x="22.3" y="16.5" width="5.6" height="4"/><rect x="22.3" y="23.4" width="5.6" height="4"/>
<path d="M20 12 L22.5 5 M20 13.5 L22.5 11.6 M20 16.5 L22.5 18.5 M20 18 L22.5 25.2 M6 9 L8.2 12 M6 21 L8.2 18" stroke="#8a8a8a" stroke-width="1.1" fill="none"/></svg>
<svg class="ic" style="left:443px;top:701.5px;opacity:1" width="28" height="28" viewBox="0 0 28 28" fill="#b4b4b4" stroke="none"><rect x="2.2" y="3.2" width="10.1" height="4.3" fill="#c6c6c6"/><rect x="2.2" y="8.4" width="10.1" height="6.8" fill="#8a8a8a"/><rect x="2.2" y="16.9" width="10.1" height="10" fill="#c6c6c6"/>
<rect x="14.2" y="3.2" width="11.7" height="6.2" fill="#8a8a8a"/><rect x="14.2" y="11.3" width="11.7" height="9.9" fill="#c6c6c6"/><rect x="14.2" y="22.5" width="11.7" height="4.4" fill="#8a8a8a"/></svg>
<svg class="ic" style="left:443px;top:742.5px;opacity:1" width="28" height="28" viewBox="0 0 28 28" fill="#b4b4b4" stroke="none"><path d="M10.7 1.4 H22 L27.5 7 V23.3 H10.7 Z" fill="#8a8a8a"/><path d="M22 1.4 V7 H27.5 Z" fill="#a8a8a8"/>
<circle cx="10.7" cy="18.3" r="9.2" fill="#383838"/>
<circle cx="10.7" cy="18.3" r="6" fill="none" stroke="#c6c6c6" stroke-width="2.2"/><path d="M6.4 22.6 L0.9 28.1" stroke="#c6c6c6" stroke-width="2.3" fill="none" stroke-linecap="round"/></svg>
<svg class="ic" style="left:443px;top:783.5px;opacity:1" width="28" height="28" viewBox="0 0 28 28" fill="#b4b4b4" stroke="none"><path d="M2 18.2 H25.9 C25.4 24.5 20 28.8 14 28.8 C8 28.8 2.6 24.5 2 18.2 Z" fill="#c6c6c6"/>
<path d="M6.6 2 C3.6 5.6 8.6 8 6.3 11.6 C5.4 13 5.6 14.8 6.6 16.3 M13.5 2 C10.5 5.6 15.5 8 13.2 11.6 C12.3 13 12.5 14.8 13.5 16.3 M20.6 2 C17.6 5.6 22.6 8 20.3 11.6 C19.4 13 19.6 14.8 20.6 16.3" fill="none" stroke="#8a8a8a" stroke-width="1.5"/></svg>
<svg class="ic" style="left:443px;top:824.5px;opacity:1" width="28" height="28" viewBox="0 0 28 28" fill="#b4b4b4" stroke="none"><rect x="2.2" y="5.8" width="23.7" height="18.1" rx="1.4"/>
<path d="M10.6 10.2 H6.2 V19.6 H10.6" fill="none" stroke="#383838" stroke-width="2.1"/>
<path d="M11.6 14.9 H17.2 M14.4 10.6 V19.2 M18.2 14.9 H23.8 M21 10.6 V19.2" fill="none" stroke="#383838" stroke-width="1.9"/></svg>
<svg class="ic" style="left:443px;top:865.5px;opacity:1" width="28" height="28" viewBox="0 0 28 28" fill="#b4b4b4" stroke="none"><polygon points="11.9,3.4 25.9,3.1 16.9,17.8 1,18.4"/>
<path d="M1.7 19.7 H17 V26 H1.7 Z" fill="none" stroke="#b4b4b4" stroke-width="1.5"/><rect x="4.4" y="21.4" width="11" height="2.4" fill="#8a8a8a"/>
<path d="M17.4 26 L27 9.6 M17.2 18.6 L26.2 3.6" fill="none" stroke="#b4b4b4" stroke-width="1.5"/></svg>
<svg class="ic" style="left:443px;top:906.5px;opacity:1" width="28" height="28" viewBox="0 0 28 28" fill="#b4b4b4" stroke="none"><path d="M4.5 7.3 H23.4 M12.2 7.3 C13.8 7.3 14.4 9 14.6 12 C15 18 17 20.7 23.4 20.7" fill="none" stroke="#8a8a8a" stroke-width="1.4"/>
<circle cx="4.5" cy="7.3" r="3.6"/><circle cx="23.4" cy="7.3" r="3.6"/><circle cx="23.4" cy="20.7" r="3.6"/></svg>
<svg class="ic" style="left:1001.4px;top:551.5px;opacity:1" width="28" height="28" viewBox="0 0 28 28" fill="#b4b4b4" stroke="none"><path d="M9.9 1 H3 Q0 1 0 4 V21.8 Q0 24.8 3 24.8 H9.9 V18.2 H4 V6.8 H9.9 Z" fill="#7c7c7c"/>
<path d="M17.6 3.4 L25.6 2 Q26.6 2 26.6 3 V22.8 Q26.6 23.8 25.6 23.8 L17.6 22.4" fill="none" stroke="#707070" stroke-width="1.8"/>
<rect x="5.6" y="11" width="12" height="3.7" fill="#b2b2b2"/><polygon points="15.8,9 22.6,12.9 15.8,17" fill="#b8b8b8"/></svg>
<svg class="ic" style="left:916.8px;top:324.9px" width="14" height="22.6" viewBox="-2 -2 14 22.6" fill="none" stroke="#ececec" stroke-width="3.2" stroke-linejoin="miter"><path d="M0.5 0.5 L9 9.3 L0.5 18.1"/></svg><svg class="ic" style="left:916.8px;top:368.3px" width="14" height="22.6" viewBox="-2 -2 14 22.6" fill="none" stroke="#dcdcdc" stroke-width="3.2" stroke-linejoin="miter"><path d="M0.5 0.5 L9 9.3 L0.5 18.1"/></svg><svg class="ic" style="left:22.2px;top:729.4px" width="14.4" height="23" viewBox="-2 -2 14.4 23" fill="none" stroke="#c6c6c6" stroke-width="4" stroke-linejoin="miter"><path d="M0.5 0.5 L9.4 9.5 L0.5 18.5"/></svg><svg class="ic" style="left:157px;top:729.4px" width="14.4" height="23" viewBox="-2 -2 14.4 23" fill="none" stroke="#c6c6c6" stroke-width="4" stroke-linejoin="miter"><path d="M0.5 0.5 L9.4 9.5 L0.5 18.5"/></svg><svg class="ic" style="left:347.6px;top:729.4px" width="14.4" height="23" viewBox="-2 -2 14.4 23" fill="none" stroke="#c6c6c6" stroke-width="4" stroke-linejoin="miter"><path d="M0.5 0.5 L9.4 9.5 L0.5 18.5"/></svg>
<!-- tooltip -->
<div class="a" style="left:1419px;top:543px;width:375px;height:58px;background:#efefef;border:2px solid #f6f6f6;box-shadow:0 0 0 2px #2b2b2b"></div>
<div class="tl">
<div class="t " style="left:487.50px;top:-13.66px;font-size:25px;line-height:35px;letter-spacing:-0.020px;color:#666666;font-weight:400">Open Source Location</div>
<div class="t " style="left:487.50px;top:27.34px;font-size:25px;line-height:35px;letter-spacing:-0.288px;color:#666666;font-weight:400">Open In External Editor</div>
<div class="t ns" style="left:414.30px;top:74.26px;font-size:18.6px;line-height:26px;letter-spacing:3.900px;color:#606060;font-weight:700;transform-origin:0 0;transform:scaleX(0.84)">COMMON</div>
<div class="t " style="left:487.60px;top:113.84px;font-size:25px;line-height:35px;letter-spacing:-0.462px;color:#ececec;font-weight:400">Edit...</div>
<div class="t " style="left:487.60px;top:154.54px;font-size:25px;line-height:35px;letter-spacing:-0.398px;color:#ececec;font-weight:400">Rename</div>
<div class="t sc" style="left:907.70px;top:157.87px;font-size:20px;line-height:28px;letter-spacing:0.383px;color:#9a9a9a;font-weight:400">F2</div>
<div class="t " style="left:487.60px;top:195.34px;font-size:25px;line-height:35px;letter-spacing:0.210px;color:#ececec;font-weight:400">Duplicate</div>
<div class="t sc" style="left:852.60px;top:198.67px;font-size:20px;line-height:28px;letter-spacing:0.159px;color:#9a9a9a;font-weight:400">CTRL+D</div>
<div class="t " style="left:488.00px;top:236.04px;font-size:25px;line-height:35px;letter-spacing:0.040px;color:#ececec;font-weight:400">Save</div>
<div class="t sc" style="left:852.60px;top:239.37px;font-size:20px;line-height:28px;letter-spacing:0.139px;color:#9a9a9a;font-weight:400">CTRL+S</div>
<div class="t " style="left:487.60px;top:276.84px;font-size:25px;line-height:35px;letter-spacing:0.108px;color:#ececec;font-weight:400">Delete</div>
<div class="t sc" style="left:857.00px;top:280.17px;font-size:20px;line-height:28px;letter-spacing:-0.633px;color:#9a9a9a;font-weight:400">DELETE</div>
<div class="t " style="left:488.50px;top:319.74px;font-size:25px;line-height:35px;letter-spacing:0.129px;color:#ffffff;font-weight:400">Asset Actions</div>
<div class="t " style="left:488.50px;top:363.14px;font-size:25px;line-height:35px;letter-spacing:0.277px;color:#ececec;font-weight:400">Asset Localization</div>
<div class="t ns" style="left:413.46px;top:410.16px;font-size:18.6px;line-height:26px;letter-spacing:2.944px;color:#606060;font-weight:700;transform-origin:0 0;transform:scaleX(0.84)">EXPLORE</div>
<div class="t " style="left:488.00px;top:448.94px;font-size:25px;line-height:35px;letter-spacing:-0.243px;color:#ececec;font-weight:400">Show in Folder View</div>
<div class="t sc" style="left:852.60px;top:452.27px;font-size:20px;line-height:28px;letter-spacing:0.359px;color:#9a9a9a;font-weight:400">CTRL+B</div>
<div class="t " style="left:488.00px;top:490.04px;font-size:25px;line-height:35px;letter-spacing:-0.177px;color:#ececec;font-weight:400">Show in Explorer</div>
<div class="t ns" style="left:413.46px;top:536.86px;font-size:18.6px;line-height:26px;letter-spacing:2.451px;color:#606060;font-weight:700;transform-origin:0 0;transform:scaleX(0.84)">REFERENCES</div>
<div class="t " style="left:488.00px;top:575.84px;font-size:25px;line-height:35px;letter-spacing:-0.211px;color:#ececec;font-weight:400">Copy Reference</div>
<div class="t " style="left:488.00px;top:616.84px;font-size:25px;line-height:35px;letter-spacing:-0.320px;color:#ececec;font-weight:400">Copy File Path</div>
<div class="t " style="left:487.60px;top:657.84px;font-size:25px;line-height:35px;letter-spacing:0.069px;color:#ececec;font-weight:400">Reference Viewer...</div>
<div class="t sc" style="left:797.00px;top:661.17px;font-size:20px;line-height:28px;letter-spacing:0.397px;color:#9a9a9a;font-weight:400">ALT+SHIFT+R</div>
<div class="t " style="left:488.00px;top:698.84px;font-size:25px;line-height:35px;letter-spacing:-0.240px;color:#ececec;font-weight:400">Size Map...</div>
<div class="t sc" style="left:791.10px;top:702.17px;font-size:20px;line-height:28px;letter-spacing:0.687px;color:#9a9a9a;font-weight:400">ALT+SHIFT+M</div>
<div class="t " style="left:488.50px;top:739.84px;font-size:25px;line-height:35px;letter-spacing:-0.025px;color:#ececec;font-weight:400">Audit Assets...</div>
<div class="t sc" style="left:797.00px;top:743.17px;font-size:20px;line-height:28px;letter-spacing:0.397px;color:#9a9a9a;font-weight:400">ALT+SHIFT+A</div>
<div class="t " style="left:488.00px;top:780.84px;font-size:25px;line-height:35px;letter-spacing:-0.033px;color:#ececec;font-weight:400">Shader Cook Statistics...</div>
<div class="t " style="left:488.00px;top:821.84px;font-size:25px;line-height:35px;letter-spacing:-0.062px;color:#ececec;font-weight:400">Open SkeletalMesh.h</div>
<div class="t " style="left:488.50px;top:862.84px;font-size:25px;line-height:35px;letter-spacing:0.134px;color:#ececec;font-weight:400">View Documentation</div>
<div class="t " style="left:488.00px;top:903.84px;font-size:25px;line-height:35px;letter-spacing:-0.113px;color:#ececec;font-weight:400">Connect To Source Control...</div>
<div class="t " style="left:999.50px;top:334.44px;font-size:25px;line-height:35px;letter-spacing:-0.089px;color:#ececec;font-weight:400">Create Blueprint Using This...</div>
<div class="t ns" style="left:971.36px;top:380.86px;font-size:18.6px;line-height:26px;letter-spacing:3.754px;color:#606060;font-weight:700;transform-origin:0 0;transform:scaleX(0.84)">FIND</div>
<div class="t " style="left:999.50px;top:419.94px;font-size:25px;line-height:35px;letter-spacing:0.161px;color:#ececec;font-weight:400">Select Actors Using This Asset</div>
<div class="t ns" style="left:971.36px;top:466.66px;font-size:18.6px;line-height:26px;letter-spacing:3.882px;color:#606060;font-weight:700;transform-origin:0 0;transform:scaleX(0.84)">MOVE</div>
<div class="t " style="left:999.00px;top:505.44px;font-size:25px;line-height:35px;letter-spacing:-0.218px;color:#ffffff;font-weight:400">Export...</div>
<div class="t " style="left:1046.00px;top:546.84px;font-size:25px;line-height:35px;letter-spacing:0.150px;color:#ececec;font-weight:400">Migrate...</div>
<div class="t ns" style="left:972.20px;top:593.56px;font-size:18.6px;line-height:26px;letter-spacing:3.097px;color:#606060;font-weight:700;transform-origin:0 0;transform:scaleX(0.84)">ADVANCED</div>
<div class="t " style="left:999.00px;top:632.54px;font-size:25px;line-height:35px;letter-spacing:-0.314px;color:#ececec;font-weight:400">Reload</div>
<div class="t " style="left:999.00px;top:673.44px;font-size:25px;line-height:35px;letter-spacing:-0.148px;color:#ececec;font-weight:400">Replace References</div>
<div class="t " style="left:999.00px;top:714.24px;font-size:25px;line-height:35px;letter-spacing:0.020px;color:#ececec;font-weight:400">Bulk Edit via Property Matrix...</div>
<div class="t " style="left:999.50px;top:755.04px;font-size:25px;line-height:35px;letter-spacing:-0.068px;color:#ececec;font-weight:400">Show Metadata</div>
<div class="t " style="left:1000.00px;top:795.84px;font-size:25px;line-height:35px;letter-spacing:0.146px;color:#ececec;font-weight:400">Validate Assets</div>
<div class="t " style="left:1000.00px;top:836.84px;font-size:25px;line-height:35px;letter-spacing:-0.029px;color:#ececec;font-weight:400">Validate Assets and Dependencies</div>
<div class="t ns" style="left:1437.05px;top:556.98px;font-size:24px;line-height:34px;letter-spacing:0.228px;color:#141414;font-weight:400;transform-origin:0 0;transform:scaleX(0.955)">Export the selected assets to file.</div>
<div class="t ns" style="left:62.80px;top:724.91px;font-size:24.5px;line-height:34px;letter-spacing:-0.667px;color:#c2c2c2;font-weight:400">HELIX</div>
<div class="t ns" style="left:196.50px;top:724.91px;font-size:24.5px;line-height:34px;letter-spacing:0.570px;color:#c2c2c2;font-weight:400">Characters</div>
<div class="t ns" style="left:-47.68px;top:794.13px;font-size:23px;line-height:32px;letter-spacing:0.600px;color:#5a5a5a;font-weight:400">Search</div>
<div class="t ns" style="left:33.90px;top:794.13px;font-size:23px;line-height:32px;letter-spacing:1.573px;color:#5a5a5a;font-weight:400">Meshes</div>
<div class="t ns" style="left:44.80px;top:1063.46px;font-size:23.5px;line-height:33px;letter-spacing:-0.176px;color:#c4c4c4;font-weight:400">SK_Mannequin</div>
<div class="t ns tb" style="left:45.80px;top:1157.33px;font-size:17.8px;line-height:25px;letter-spacing:-0.421px;color:#7c7c7c;font-weight:700">Skeleton</div>
<div class="t ns" style="left:274.05px;top:1063.46px;font-size:23.5px;line-height:33px;letter-spacing:-0.522px;color:#ffffff;font-weight:400">SKM_Manny</div>
<div class="t ns tb" style="left:275.05px;top:1157.33px;font-size:17.8px;line-height:25px;letter-spacing:-0.329px;color:#ffffff;font-weight:700">Skeletal Mesh</div>
<div class="t ns" style="left:503.30px;top:1063.46px;font-size:23.5px;line-height:33px;letter-spacing:-0.405px;color:#c4c4c4;font-weight:400">SKM_Manny_Invis</div>
<div class="t ns tb" style="left:504.30px;top:1157.33px;font-size:17.8px;line-height:25px;letter-spacing:-0.346px;color:#7c7c7c;font-weight:700">Skeletal Mesh</div>
<div class="t ns" style="left:732.55px;top:1063.46px;font-size:23.5px;line-height:33px;letter-spacing:-0.770px;color:#c4c4c4;font-weight:400">SKM_Manny_</div>
<div class="t ns" style="left:732.55px;top:1090.06px;font-size:23.5px;line-height:33px;letter-spacing:-0.252px;color:#c4c4c4;font-weight:400">Simple</div>
<div class="t ns tb" style="left:733.55px;top:1157.33px;font-size:17.8px;line-height:25px;letter-spacing:-0.346px;color:#7c7c7c;font-weight:700">Skeletal Mesh</div>
<div class="t ns" style="left:961.80px;top:1063.46px;font-size:23.5px;line-height:33px;letter-spacing:-0.629px;color:#c4c4c4;font-weight:400">SKM_Quinn</div>
<div class="t ns tb" style="left:962.80px;top:1157.33px;font-size:17.8px;line-height:25px;letter-spacing:-0.346px;color:#7c7c7c;font-weight:700">Skeletal Mesh</div>
<div class="t ns" style="left:1191.05px;top:1063.46px;font-size:23.5px;line-height:33px;letter-spacing:-0.532px;color:#c4c4c4;font-weight:400">SKM_Quinn_Invis</div>
<div class="t ns tb" style="left:1192.05px;top:1157.33px;font-size:17.8px;line-height:25px;letter-spacing:-0.346px;color:#7c7c7c;font-weight:700">Skeletal Mesh</div>
<div class="t ns" style="left:1420.30px;top:1063.46px;font-size:23.5px;line-height:33px;letter-spacing:-0.856px;color:#c4c4c4;font-weight:400">SKM_Quinn_</div>
<div class="t ns" style="left:1420.30px;top:1090.06px;font-size:23.5px;line-height:33px;letter-spacing:-0.032px;color:#c4c4c4;font-weight:400">Simple</div>
<div class="t ns tb" style="left:1421.30px;top:1157.33px;font-size:17.8px;line-height:25px;letter-spacing:-0.271px;color:#7c7c7c;font-weight:700">Skeletal Mesh</div>
</div>
<!-- red annotation strokes -->
<svg class="a" style="left:0;top:0" width="2000" height="700" viewBox="0 0 2000 700" fill="none" stroke="#fb0007" stroke-width="6.5" stroke-linecap="round">
<path d="M435.2 369.6 Q590 368.2 744.4 362.9" stroke-width="6.2"/>
<path d="M936.4 538 L1146.4 538" stroke-width="6"/>
</svg>
</body></html>
